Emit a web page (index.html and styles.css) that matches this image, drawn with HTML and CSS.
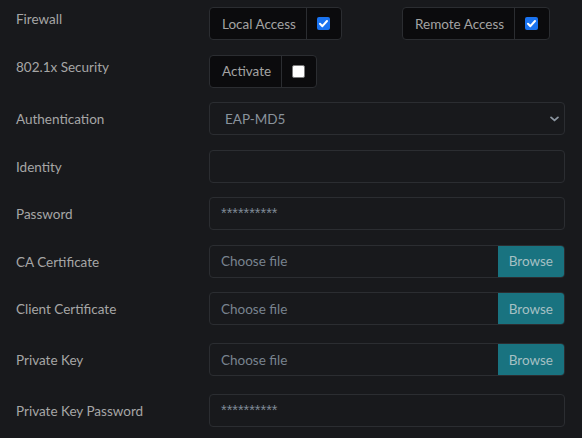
FILE: index.html
```html
<!DOCTYPE html>
<html>
<head>
<meta charset="utf-8">
<link rel="stylesheet" href="styles.css">
</head>
<body>
<div class="form">
  <div class="row top">
    <div class="lbl">Firewall</div>
    <div class="ctrl two">
      <div class="group">
        <span class="gtext">Local Access</span>
        <span class="gcheck"><span class="cb on"><svg viewBox="0 0 13 13" width="13" height="13"><path d="M3 6.8 L5.4 9.2 L10 4" fill="none" stroke="#fff" stroke-width="2" stroke-linecap="round" stroke-linejoin="round"/></svg></span></span>
      </div>
      <div class="group">
        <span class="gtext">Remote Access</span>
        <span class="gcheck"><span class="cb on"><svg viewBox="0 0 13 13" width="13" height="13"><path d="M3 6.8 L5.4 9.2 L10 4" fill="none" stroke="#fff" stroke-width="2" stroke-linecap="round" stroke-linejoin="round"/></svg></span></span>
      </div>
    </div>
  </div>
  <div class="row top">
    <div class="lbl">802.1x Security</div>
    <div class="ctrl">
      <div class="group">
        <span class="gtext">Activate</span>
        <span class="gcheck"><span class="cb off"></span></span>
      </div>
    </div>
  </div>
  <div class="row">
    <div class="lbl">Authentication</div>
    <div class="ctrl">
      <div class="field select">
        <span class="val">EAP-MD5</span>
        <svg class="chev" viewBox="0 0 10 6" width="9" height="6"><path d="M1.2 1.2 L5 4.6 L8.8 1.2" fill="none" stroke="#8c96a1" stroke-width="2" stroke-linecap="round" stroke-linejoin="round"/></svg>
      </div>
    </div>
  </div>
  <div class="row">
    <div class="lbl">Identity</div>
    <div class="ctrl"><div class="field"></div></div>
  </div>
  <div class="row">
    <div class="lbl">Password</div>
    <div class="ctrl"><div class="field"><span class="stars">**********</span></div></div>
  </div>
  <div class="row">
    <div class="lbl">CA Certificate</div>
    <div class="ctrl"><div class="field file"><span class="ph">Choose file</span><span class="browse">Browse</span></div></div>
  </div>
  <div class="row wide">
    <div class="lbl">Client Certificate</div>
    <div class="ctrl"><div class="field file"><span class="ph">Choose file</span><span class="browse">Browse</span></div></div>
  </div>
  <div class="row wide">
    <div class="lbl">Private Key</div>
    <div class="ctrl"><div class="field file"><span class="ph">Choose file</span><span class="browse">Browse</span></div></div>
  </div>
  <div class="row">
    <div class="lbl">Private Key Password</div>
    <div class="ctrl"><div class="field"><span class="stars">**********</span></div></div>
  </div>
</div>
</body>
</html>
```
FILE: styles.css
```css
* { box-sizing: border-box; }
html, body { margin: 0; padding: 0; }
body {
  background: #18191c;
  font-family: Lato, "Noto Sans", "Liberation Sans", sans-serif;
  font-size: 13.5px;
  color: #a5a5a5;
  width: 582px;
  height: 438px;
  overflow: hidden;
}
.form {
  display: flex;
  flex-direction: column;
  padding: 7px 17px 0 16px;
}
.row {
  display: flex;
  align-items: center;
  margin-bottom: 14.5px;
}
.row.wide { margin-bottom: 18px; }
.row.top { align-items: flex-start; }
.lbl {
  width: 193px;
  flex: none;
  line-height: 21px;
  padding-top: 2px;
  color: #a6a6a6;
}
.ctrl {
  flex: 1;
  display: flex;
}
.ctrl.two {
  display: grid;
  grid-template-columns: 193px auto;
  justify-items: start;
}
.group {
  display: flex;
  height: 33px;
  background: #0b0b0d;
  border: 1px solid #2b2d31;
  border-radius: 4px;
}
.gtext {
  display: flex;
  align-items: center;
  padding: 0 10px 0 12px;
  color: #a3a3a3;
  border-right: 1px solid #2b2d31;
}
.gcheck {
  display: flex;
  align-items: center;
  padding: 0 11px 0 10px;
}
.cb {
  display: block;
  width: 13px;
  height: 13px;
  border-radius: 2px;
}
.cb svg { display: block; }
.cb.on { background: #1a73f0; }
.cb.off { background: #fff; border: 1px solid #7a7a7a; }
.field {
  flex: 1;
  height: 33px;
  border: 1px solid #2b2d31;
  border-radius: 4px;
  background: #18191c;
  display: flex;
  align-items: center;
  overflow: hidden;
}
.select { padding: 0 5px 0 15px; justify-content: space-between; }
.select .val { color: #8a939c; }
.chev { display: block; }
.stars {
  padding-left: 11px;
  color: #7f8a96;
  font-family: "Liberation Sans", sans-serif;
  font-size: 14.5px;
  position: relative;
  top: -1px;
}
.file { padding-left: 11px; }
.ph { flex: 1; color: #78838f; }
.browse {
  height: 100%;
  display: flex;
  align-items: center;
  padding: 0 11px;
  background: #197380;
  color: #a6c0c4;
}
```
